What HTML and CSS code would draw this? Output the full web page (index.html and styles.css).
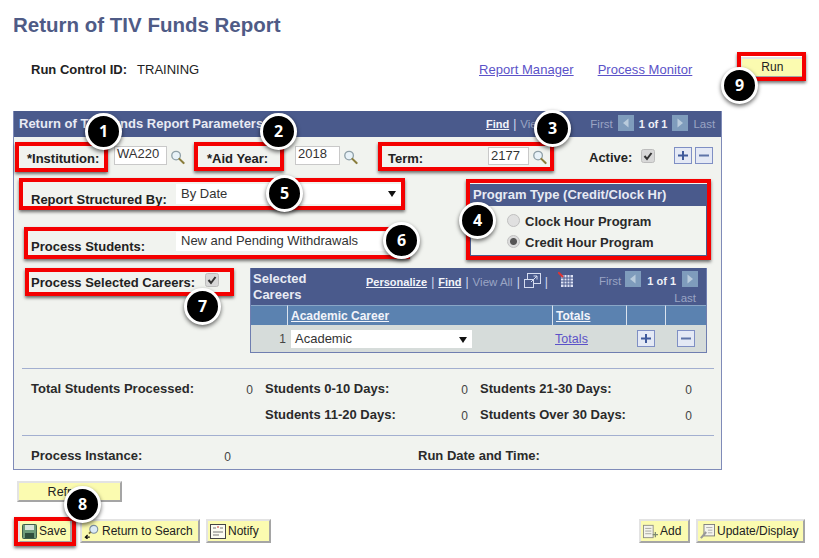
FILE: index.html
```html
<!DOCTYPE html>
<html lang="en">
<head>
<meta charset="utf-8">
<title>Return of TIV Funds Report</title>
<link rel="stylesheet" href="styles.css">
</head>
<body>
<svg class="defs" width="0" height="0" aria-hidden="true">
  <symbol id="mag" viewBox="0 0 16 16">
    <circle cx="6.5" cy="6.5" r="4.6" fill="#e8f2f8" stroke="#8fa0a8" stroke-width="1.4"/>
    <path d="M10 10l4.5 4.5" stroke="#8a7d3c" stroke-width="2.2" stroke-linecap="round"/>
  </symbol>
  <symbol id="plus" viewBox="0 0 18 17">
    <rect x=".5" y=".5" width="17" height="16" fill="#e4e9f5" stroke="#7f8fc4"/>
    <path d="M4 8.5h10M9 4v9" stroke="#3f5a9c" stroke-width="2"/>
  </symbol>
  <symbol id="minus" viewBox="0 0 18 17">
    <rect x=".5" y=".5" width="17" height="16" fill="#e4e9f5" stroke="#7f8fc4"/>
    <path d="M4 8.5h10" stroke="#5f74a8" stroke-width="2"/>
  </symbol>
  <symbol id="check" viewBox="0 0 14 14">
    <rect x=".5" y=".5" width="13" height="13" rx="2" fill="#d8d8d8" stroke="#bdbdbd"/>
    <path d="M3.5 7l2.5 3 4.5-6" fill="none" stroke="#333" stroke-width="2"/>
  </symbol>
  <symbol id="left" viewBox="0 0 16 16">
    <rect width="16" height="16" fill="#7f9cbc"/>
    <path d="M10.5 3.5v9L5 8z" fill="#b9cbdc"/>
  </symbol>
  <symbol id="right" viewBox="0 0 16 16">
    <rect width="16" height="16" fill="#7f9cbc"/>
    <path d="M5.5 3.5v9L11 8z" fill="#b9cbdc"/>
  </symbol>
</svg>

<main class="page">
  <h1 class="title">Return of TIV Funds Report</h1>

  <div class="run-row">
    <div class="run-id"><b>Run Control ID:</b><span class="run-val">TRAINING</span></div>
    <a class="link link-rm" href="#">Report Manager</a>
    <a class="link link-pm" href="#">Process Monitor</a>
    <button class="btn btn-run" type="button">Run</button>
  </div>

  <section class="panel">
    <header class="panel-head">
      <span class="panel-title">Return of TIV Funds Report Parameters</span>
      <span class="panel-nav">
        <a class="nav-link" href="#">Find</a><span class="sep">|</span><span class="dim nav-view">View All</span>
        <span class="dim nav-first">First</span>
        <svg class="arrow"><use href="#left"/></svg>
        <b class="count">1 of 1</b>
        <svg class="arrow"><use href="#right"/></svg>
        <span class="dim nav-last">Last</span>
      </span>
    </header>

    <div class="panel-body">
      <div class="row-keys">
        <label class="lbl key-inst">*Institution:</label>
        <span class="input in-inst">WA220</span>
        <svg class="mag"><use href="#mag"/></svg>
        <label class="lbl key-aid">*Aid Year:</label>
        <span class="input in-aid">2018</span>
        <svg class="mag"><use href="#mag"/></svg>
        <label class="lbl key-term">Term:</label>
        <span class="input in-term">2177</span>
        <svg class="mag"><use href="#mag"/></svg>
        <label class="lbl key-active">Active:</label>
        <svg class="check"><use href="#check"/></svg>
        <svg class="pm pm-add"><use href="#plus"/></svg>
        <svg class="pm pm-del"><use href="#minus"/></svg>
      </div>

      <div class="row-mid">
        <div class="mid-left">
          <div class="field field-rep">
            <label class="lbl lbl-low">Report Structured By:</label>
            <span class="select sel-rep">By Date<i class="caret"></i></span>
          </div>
          <div class="field field-proc">
            <label class="lbl lbl-low">Process Students:</label>
            <span class="select sel-proc">New and Pending Withdrawals</span>
          </div>
        </div>
        <div class="ptype">
          <div class="ptype-head">Program Type (Credit/Clock Hr)</div>
          <div class="ptype-body">
            <div class="radio-row"><i class="radio"></i><span>Clock Hour Program</span></div>
            <div class="radio-row"><i class="radio radio-on"></i><span>Credit Hour Program</span></div>
          </div>
        </div>
      </div>

      <div class="row-careers">
        <div class="proc-sel">
          <label class="lbl">Process Selected Careers:</label>
          <svg class="check check-sel"><use href="#check"/></svg>
        </div>
        <div class="cgrid">
          <div class="cgrid-head">
            <b class="cgrid-title">Selected Careers</b>
            <span class="cgrid-tools">
              <a class="nav-link" href="#">Personalize</a><span class="sep">|</span><a class="nav-link" href="#">Find</a><span class="sep">|</span><span class="dim">View All</span><span class="sep">|</span>
              <svg class="zoomi" viewBox="0 0 17 15"><rect x="3.5" y=".5" width="13" height="10" fill="none" stroke="#d5dcf0"/><rect x=".5" y="6.5" width="9" height="8" fill="#4a5a8c" stroke="#d5dcf0"/><path d="M7 9l6-6M9.5 3H13v3.5" fill="none" stroke="#d5dcf0"/></svg>
              <span class="sep">|</span>
              <svg class="dl" viewBox="0 0 15 15"><path d="M3 3h12v12H3z" fill="#dfe3f5"/><path d="M6 3v12M9 3v12M12 3v12M3 6h12M3 9h12M3 12h12" stroke="#4a5a8c"/><path d="M0 0l5 5" stroke="#d33" stroke-width="2"/></svg>
            </span>
            <span class="cgrid-nav">
              <span class="cgrid-nav-top">
                <span class="dim">First</span>
                <svg class="arrow"><use href="#left"/></svg>
                <b class="count">1 of 1</b>
                <svg class="arrow"><use href="#right"/></svg>
              </span>
              <span class="dim cgrid-last">Last</span>
            </span>
          </div>
          <div class="cgrid-cols">
            <span class="col"></span>
            <a class="col col-link" href="#">Academic Career</a>
            <a class="col col-link" href="#">Totals</a>
            <span class="col"></span>
            <span class="col"></span>
          </div>
          <div class="cgrid-row">
            <span class="rownum">1</span>
            <span class="cell-sel"><span class="select sel-career">Academic<i class="caret"></i></span></span>
            <a class="link cell-tot" href="#">Totals</a>
            <span class="cell-pm"><svg class="pm"><use href="#plus"/></svg></span>
            <span class="cell-pm"><svg class="pm"><use href="#minus"/></svg></span>
          </div>
        </div>
      </div>

      <hr class="rule rule-a">
      <div class="stats">
        <b class="stat">Total Students Processed:<span class="val">0</span></b>
        <b class="stat">Students 0-10 Days:<span class="val">0</span></b>
        <b class="stat">Students 21-30 Days:<span class="val">0</span></b>
        <span></span>
        <b class="stat">Students 11-20 Days:<span class="val">0</span></b>
        <b class="stat">Students Over 30 Days:<span class="val">0</span></b>
      </div>
      <hr class="rule rule-b">
      <div class="instance">
        <b class="stat inst-a">Process Instance:<span class="val">0</span></b>
        <b class="stat inst-b">Run Date and Time:</b>
      </div>
    </div>
  </section>

  <div class="refresh-row"><button class="btn btn-refresh" type="button">Refresh</button></div>

  <div class="toolbar">
    <button class="btn btn-tool btn-save" type="button">
      <svg class="ti" viewBox="0 0 15 15"><rect x=".5" y=".5" width="14" height="14" rx="1" fill="#6d9b78" stroke="#3f5f4a"/><rect x="3" y="1" width="9" height="5" fill="#d9e6dc"/><rect x="3" y="9" width="9" height="5" fill="#2f4f3c"/></svg>Save</button>
    <button class="btn btn-tool btn-return" type="button">
      <svg class="ti ti-ret" viewBox="0 0 17 17"><circle cx="10.5" cy="6" r="4.5" fill="#dcebf6" stroke="#7d8fa0" stroke-width="1.3"/><path d="M7 9l-2 2" stroke="#7d7030" stroke-width="2"/><path d="M6 15H1.5M3.5 12.5L1 15l2.5 2" fill="none" stroke="#111" stroke-width="1.4"/></svg>Return to Search</button>
    <button class="btn btn-tool btn-notify" type="button">
      <svg class="ti ti-not" viewBox="0 0 16 15"><rect x=".5" y=".5" width="15" height="14" fill="#fbfbf0" stroke="#444"/><path d="M3 4h3M10 4h3M3 8h10M3 11h6" stroke="#777"/><path d="M7 3h2" stroke="#c33"/></svg>Notify</button>
    <span class="spacer"></span>
    <button class="btn btn-tool btn-add" type="button">
      <svg class="ti ti-add" viewBox="0 0 17 15"><rect x=".5" y=".5" width="11" height="14" fill="#f4f4ec" stroke="#8a8a80"/><path d="M2.5 4h7M2.5 7h7M2.5 10h7" stroke="#a0a098"/><path d="M11 11h6M14 8v6" stroke="#7d8a70" stroke-width="1.4"/></svg>Add</button>
    <button class="btn btn-tool btn-upd" type="button">
      <svg class="ti ti-upd" viewBox="0 0 17 17"><rect x="4.5" y=".5" width="12" height="13" fill="#f4f4ec" stroke="#777"/><path d="M7 4h7M9 7h5M9 10h5" stroke="#aaa"/><path d="M1 16l6-7" stroke="#999" stroke-width="2.4"/></svg>Update/Display</button>
  </div>
</main>

<div class="frame f1"></div>
<div class="frame f2"></div>
<div class="frame f3"></div>
<div class="frame f4"></div>
<div class="frame f5"></div>
<div class="frame f6"></div>
<div class="frame f7"></div>
<div class="frame f8"></div>
<div class="frame f9"></div>

<span class="badge b1">1</span>
<span class="badge b2">2</span>
<span class="badge b3">3</span>
<span class="badge b4">4</span>
<span class="badge b5">5</span>
<span class="badge b6">6</span>
<span class="badge b7">7</span>
<span class="badge b8">8</span>
<span class="badge b9">9</span>
</body>
</html>
```

FILE: styles.css
```css
* { box-sizing: border-box; }
html, body { margin: 0; padding: 0; background: #fff; }
body {
  position: relative;
  width: 819px;
  height: 558px;
  overflow: hidden;
  font: 13px/14px "Liberation Sans", Arial, sans-serif;
  color: #222;
}
.defs { position: absolute; }
.page { padding: 13px 14px 0 13px; }

.title {
  margin: 0;
  height: 24px;
  font: bold 20.5px/24px "Liberation Sans", Arial, sans-serif;
  color: #4f5b86;
}

.run-row {
  display: flex;
  align-items: center;
  height: 24px;
  margin-top: 21px;
  white-space: nowrap;
}
.run-id { margin-left: 18px; width: 448px; flex: none; color: #222; }
.run-val { margin-left: 10px; }
.link { color: #5b52c8; text-decoration: underline; letter-spacing: .05px; }
.link-rm { margin-right: 24px; }
.btn {
  display: inline-flex;
  align-items: center;
  justify-content: center;
  flex: none;
  padding: 0;
  font: 12px/14px "Liberation Sans", Arial, sans-serif;
  color: #222;
  background: #fbfbb0;
  border: 2px solid;
  border-color: #e3e3e3 #a5a5a5 #a5a5a5 #e3e3e3;
}
.btn-run { width: 64px; height: 21px; margin-left: 48px; margin-top: -6px; }

.panel {
  width: 709px;
  height: 359px;
  margin-top: 29px;
  border: 1px solid #7f8bb8;
  border-top: 0;
  background: #f1f3ef;
}
.panel-head {
  display: flex;
  align-items: center;
  height: 26px;
  padding-left: 5px;
  background: #4a5a8c;
  color: #e8ebf4;
  white-space: nowrap;
}
.panel-title { font-weight: bold; width: 467px; flex: none; }
.panel-nav { display: flex; align-items: center; flex: none; }
.nav-link { color: #f2f4fa; font-weight: bold; font-size: 11px; text-decoration: underline; }
.sep { margin: 0 4px; color: #d5dcf0; font-size: 12px; }
.dim { color: #9aa5c4; font-size: 11.5px; }
.nav-view { width: 70px; overflow: hidden; white-space: nowrap; }
.arrow { width: 16px; height: 16px; margin: 0 5px 3px; flex: none; }
.count { color: #eef0f7; font-size: 11px; white-space: nowrap; }

.lbl { font-weight: bold; white-space: nowrap; }
.row-keys {
  display: flex;
  align-items: center;
  height: 41px;
  padding-left: 13px;
}
.row-keys > * { flex: none; }
.key-inst, .key-aid, .key-term { padding-top: 2px; }
.key-inst { width: 87px; }
.input {
  display: block;
  height: 19px;
  padding: 0 2px;
  line-height: 14px;
  background: #fff;
  border: 1px solid #c9c9c9;
  color: #333;
}
.in-inst { width: 53px; margin-top: -4px; }
.mag { width: 15px; height: 16px; margin-left: 3px; margin-top: -1px; }
.key-aid { width: 88px; margin-left: 22px; }
.in-aid { width: 45px; margin-top: -4px; }
.key-term { width: 100px; margin-left: 30px; }
.in-term { width: 41px; height: 18px; margin-top: -3px; padding-top: 1px; }
.key-active { width: 52px; margin-left: 42px; }
.check { width: 14px; height: 14px; margin-top: -3px; flex: none; }
.pm { width: 18px; height: 17px; }
.pm-add { margin-left: 19px; margin-top: -4px; }
.pm-del { margin-left: 3px; margin-top: -4px; }

.row-mid { display: flex; height: 90px; }
.mid-left { width: 456px; flex: none; padding-left: 17px; }
.field { display: flex; }
.lbl-low { width: 145px; flex: none; }
.field-rep { padding-top: 15px; height: 48px; }
.field-proc { padding-top: 14px; }
.select {
  position: relative;
  display: block;
  height: 20px;
  padding: 3px 5px;
  background: #fff;
  color: #333;
}
.sel-rep { width: 225px; margin-top: -9px; }
.sel-proc { width: 220px; height: 19px; margin-top: -8px; padding-top: 2px; }
.caret {
  position: absolute;
  right: 5px;
  top: 7px;
  border: 4px solid transparent;
  border-top: 6px solid #111;
  border-bottom: 0;
}
.ptype {
  width: 237px;
  height: 72px;
  margin-top: 6px;
  border: 1px solid #4a5a8c;
}
.ptype-head {
  height: 21px;
  padding-left: 2px;
  font-weight: bold;
  line-height: 20px;
  color: #e8ebf4;
  background: #4a5a8c;
  white-space: nowrap;
}
.ptype-body { padding: 5px 0 0 36px; }
.radio-row { display: flex; align-items: center; height: 21px; font-weight: bold; color: #2a2a2a; white-space: nowrap; }
.radio {
  flex: none;
  width: 13px;
  height: 13px;
  margin: -3px 5px 0 0;
  border-radius: 50%;
  border: 1px solid #c0c0c0;
  background: #e0e0e0;
}
.radio-on { background: radial-gradient(circle, #555 0 3px, #dcdcdc 4px); }

.row-careers { display: flex; padding-left: 17px; height: 85px; }
.proc-sel { display: flex; align-items: flex-start; width: 219px; flex: none; padding-top: 8px; }
.check-sel { margin: -3px 0 0 10px; }
.cgrid { width: 457px; flex: none; height: 85px; border: 1px solid #6f7eb0; border-top: 0; background: #d6dcda; }
.cgrid-head {
  display: flex;
  height: 37px;
  background: #4a5a8c;
  color: #e8ebf4;
}
.cgrid-title { width: 112px; flex: none; padding: 3px 45px 0 2px; line-height: 16px; color: #e8ebf4; }
.cgrid-tools { display: flex; align-items: flex-start; width: 227px; flex: none; padding: 7px 0 0 3px; white-space: nowrap; }
.cgrid-tools .sep { margin: 0 4px; }
.zoomi { width: 17px; height: 15px; margin-top: -2px; flex: none; }
.dl { width: 15px; height: 15px; margin: -3px 0 0 6px; flex: none; }
.cgrid-nav { display: flex; flex-direction: column; align-items: flex-end; width: 108px; flex: none; padding-top: 3px; }
.cgrid-nav-top { display: flex; align-items: center; }
.cgrid-nav-top .arrow { margin: 0 0 3px; }
.cgrid-nav-top .dim { margin-right: 4px; }
.cgrid-nav-top .count { margin: 0 6px; }
.cgrid-last { margin: 1px 2px 0 0; }
.cgrid-cols {
  display: grid;
  grid-template-columns: 36px 265px 74px 39px 1fr;
  height: 20px;
  background: #5b82b0;
  font-size: 12px;
}
.col { border-left: 1px solid #dbe3ee; border-top: 1px solid #8aa6c6; padding: 3px 0 0 3px; }
.col:first-child { border-left: 0; }
.col-link { color: #f2f4fa; font-weight: bold; text-decoration: underline; }
.cgrid-row {
  display: grid;
  grid-template-columns: 36px 265px 74px 39px 1fr;
  align-items: center;
  height: 27px;
}
.rownum { text-align: right; padding-right: 1px; color: #444; font-size: 12px; }
.cell-sel { padding-left: 4px; }
.sel-career { width: 181px; height: 18px; padding: 2px 4px; }
.cell-tot { padding-left: 3px; font-size: 12.5px; }
.cell-pm { display: flex; justify-content: center; }

.rule { height: 1px; margin: 0 7px 0 8px; border: 0; background: #a3afd0; }
.rule-a { margin-top: 15px; }
.rule-b { margin-top: 0; }
.stats {
  display: grid;
  grid-template-columns: 222px 203px 212px;
  grid-auto-rows: 26px;
  column-gap: 12px;
  height: 66px;
  padding: 13px 0 0 17px;
}
.stat { display: flex; justify-content: space-between; color: #2a2a2a; white-space: nowrap; }
.val { font-weight: normal; font-size: 12px; color: #444; padding-top: 1px; }
.instance { display: flex; padding: 13px 0 0 17px; }
.inst-a { width: 200px; flex: none; }
.inst-b { margin-left: 187px; }

.refresh-row { margin-top: 11px; margin-left: 4px; }
.btn-refresh { width: 105px; height: 21px; font-size: 12.5px; }
.toolbar { display: flex; align-items: center; margin-top: 17px; padding-left: 5px; }
.btn-tool { height: 24px; justify-content: flex-start; padding-left: 2px; white-space: nowrap; }
.ti { width: 15px; height: 15px; margin-right: 2px; flex: none; }
.btn-save { width: 54px; }
.btn-return { width: 120px; margin-left: 8px; }
.btn-notify { width: 65px; margin-left: 6px; }
.ti-ret, .ti-not { width: 16px; }
.spacer { width: 368px; flex: none; }
.btn-add { width: 51px; }
.btn-upd { width: 109px; margin-left: 6px; }

.frame {
  position: absolute;
  border: 4px solid #f40000;
  box-shadow: 0 2px 3px rgba(0, 0, 0, .55);
  pointer-events: none;
}
.f1 { left: 15px; top: 142px; width: 93px; height: 30px; }
.f2 { left: 194px; top: 142px; width: 90px; height: 29px; }
.f3 { left: 378px; top: 142px; width: 176px; height: 29px; }
.f4 { left: 466px; top: 179px; width: 245px; height: 81px; }
.f5 { left: 19px; top: 178px; width: 386px; height: 32px; }
.f6 { left: 24px; top: 227px; width: 386px; height: 32px; }
.f7 { left: 25px; top: 268px; width: 209px; height: 28px; }
.f8 { left: 14px; top: 517px; width: 62px; height: 29px; }
.f9 { left: 737px; top: 52px; width: 69px; height: 29px; }

.badge {
  position: absolute;
  width: 37px;
  height: 37px;
  border: 3px solid #fff;
  border-radius: 50%;
  background: #000;
  color: #fff;
  font: bold 16px/31px "Open Sans", "Liberation Sans", sans-serif;
  text-align: center;
  box-shadow: 0 2px 4px rgba(0, 0, 0, .6);
}
.b1 { left: 85px; top: 113px; }
.b2 { left: 260px; top: 113px; }
.b3 { left: 534px; top: 110px; }
.b4 { left: 459px; top: 202px; }
.b5 { left: 266px; top: 175px; }
.b6 { left: 383px; top: 222px; }
.b7 { left: 184px; top: 288px; }
.b8 { left: 64px; top: 486px; }
.b9 { left: 721px; top: 67px; }
```
